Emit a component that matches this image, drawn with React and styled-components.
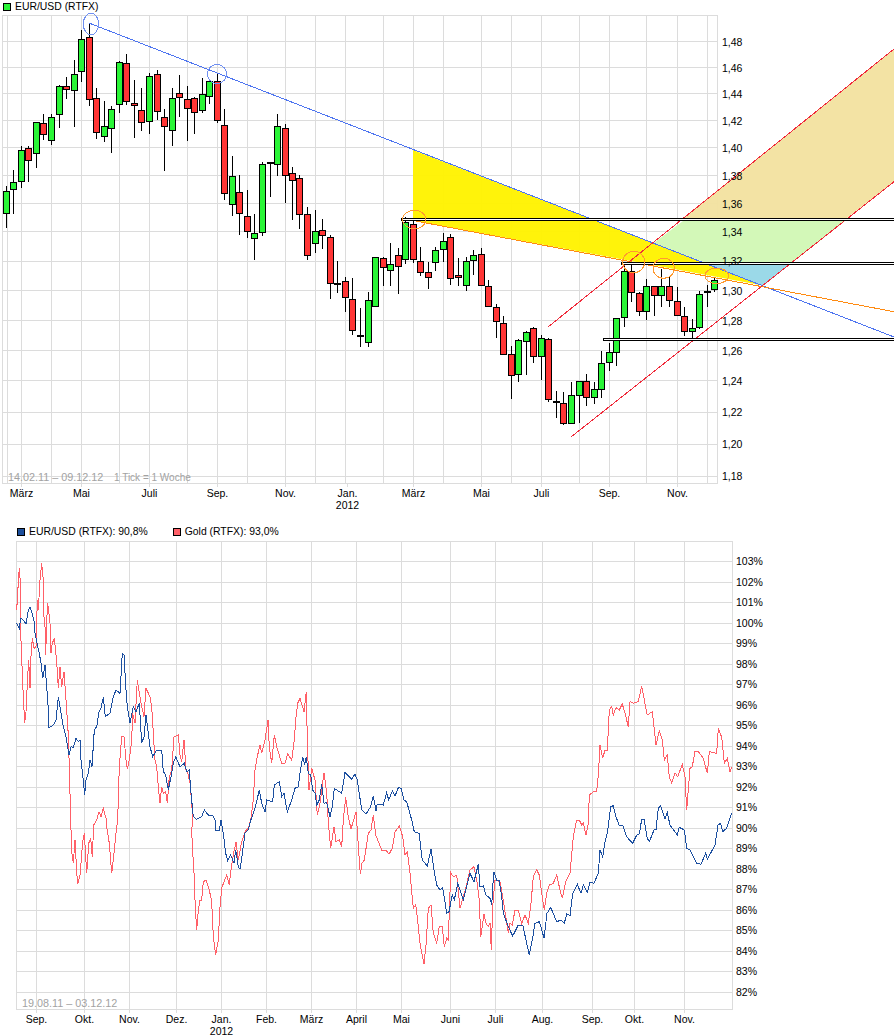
import React from 'react';
import styled, { createGlobalStyle } from 'styled-components';

const GlobalStyle = createGlobalStyle`
  html, body { margin: 0; padding: 0; background: #fff; }
  body { font-family: "Liberation Sans", Arial, sans-serif; }
`;

const Page = styled.main`
  width: 894px;
  height: 1036px;
  display: flex;
  flex-direction: column;
  overflow: hidden;
  background: #fff;
`;

const Legend = styled.div`
  display: flex;
  align-items: center;
  gap: 25px;
  height: ${p => p.$height}px;
  padding-left: ${p => p.$left}px;
  padding-top: ${p => p.$top}px;
  box-sizing: border-box;
  flex: none;
`;

const LegendItem = styled.div`
  display: flex;
  align-items: center;
  gap: 4px;
  font-size: 10.4px;
  line-height: 12px;
  color: #000;
  white-space: nowrap;
`;

const Swatch = styled.span`
  display: block;
  box-sizing: border-box;
  width: 8px;
  height: 8px;
  border: 1px solid #000;
  background: ${p => p.$color};
`;

const ChartSvg = styled.svg`
  display: block;
  flex: none;
  width: 894px;
  font-family: "Liberation Sans", Arial, sans-serif;
`;

const GridLine = styled.line`
  stroke: #dcdcdc;
  stroke-width: 1;
  shape-rendering: crispEdges;
`;

const AxisText = styled.text`
  font-size: 10.5px;
  fill: #000;
  text-anchor: ${p => p.$anchor || 'start'};
`;

const RangeText = styled.text`
  font-size: ${p => p.$size}px;
  fill: #a2a2a2;
`;

const Wick = styled.line`
  stroke: #000;
  stroke-width: 1;
  shape-rendering: crispEdges;
`;

const Body = styled.rect`
  stroke: #000;
  stroke-width: 1;
  shape-rendering: crispEdges;
  fill: ${p => (p.$up ? '#2af537' : '#ff3535')};
`;

const Zone = styled.polygon`
  fill: ${p => p.$fill};
  opacity: ${p => p.$opacity};
`;

const Trend = styled.line`
  stroke: ${p => p.$color};
  stroke-width: 1;
  shape-rendering: crispEdges;
`;

const Marker = styled.ellipse`
  fill: none;
  stroke: ${p => p.$color};
  stroke-width: 1;
  shape-rendering: crispEdges;
`;

const Level = styled.rect`
  fill: #fff;
  stroke: #000;
  stroke-width: 1;
  shape-rendering: crispEdges;
`;

const Series = styled.polyline`
  fill: none;
  stroke: ${p => p.$color};
  stroke-width: 1;
  shape-rendering: crispEdges;
`;

// [x, wickTop, wickBottom, bodyTop, bodyBottom, up] — measured at 3x with an offset per block
const block = (ox, oy, rows) =>
  rows.map(([x, wt, wb, bt, bb, c]) => ({
    x: Math.floor(ox + x / 3),
    wt: Math.floor(oy + wt / 3),
    wb: Math.floor(oy + wb / 3),
    bt: Math.floor(oy + bt / 3),
    bb: Math.floor(oy + bb / 3),
    up: c === 'g',
  }));

const candles = [
  ...block(0, 0, [
    [19,560,684,574,644,'g'],[40,510,642,547,571,'g'],[64,438,564,451,548,'g'],[85,440,548,445,485,'r'],
    [109,367,504,367,464,'g'],[130,342,422,370,407,'r'],[154,342,435,352,424,'g'],[178,255,384,259,347,'g'],
    [199,232,297,259,271,'r'],[223,180,381,223,274,'g'],[244,90,246,118,217,'g'],[268,70,318,112,301,'r'],
    [289,264,417,295,400,'r'],[313,304,426,379,412,'g'],[334,319,459,328,388,'g'],[358,184,339,187,316,'g'],
    [379,162,316,190,307,'r'],[403,240,414,310,319,'r'],[424,264,393,331,370,'r'],[448,220,402,229,367,'g'],
    [472,210,360,223,337,'r'],[493,327,513,352,382,'r'],[517,264,438,295,394,'g'],[538,225,351,280,295,'r'],
    [562,259,423,298,328,'r'],[583,292,402,295,340,'r'],[607,234,340,283,334,'g'],[628,238,312,244,292,'g'],
    [652,222,369,244,364,'r'],[673,327,600,376,583,'r'],[697,468,648,529,616,'g'],[718,525,705,577,643,'r'],
    [742,570,714,649,697,'r'],[763,642,780,700,718,'g'],[787,487,708,493,700,'g'],[811,487,591,487,493,'g'],
    [832,342,528,379,496,'g'],[856,372,609,385,529,'r'],[877,502,660,520,544,'r'],[898,525,687,535,646,'r'],
  ]),
  ...block(300, 130, [
    [22,232,390,253,379,'r'],[46,240,370,304,343,'g'],[67,267,357,301,319,'r'],[91,316,507,322,464,'r'],
    [112,393,489,460,466,'g'],[136,442,546,454,505,'r'],[157,444,617,508,605,'r'],[181,534,651,616,622,'r'],
    [205,487,651,511,640,'g'],[226,382,532,382,532,'g'],[250,382,470,385,415,'r'],[271,340,468,403,424,'g'],
    [295,354,492,376,412,'r'],[316,262,402,277,391,'g'],[340,265,400,283,391,'r'],[361,351,438,394,430,'r'],
    [385,397,477,427,445,'r'],[406,352,424,361,400,'g'],[430,309,396,334,361,'g'],[451,312,465,322,448,'r'],
    [475,384,468,436,445,'r'],[499,382,483,394,469,'g'],[520,361,435,376,394,'g'],[544,354,469,373,469,'r'],
    [565,450,532,469,532,'r'],[589,522,624,532,577,'r'],[610,559,676,580,676,'r'],[634,649,807,673,739,'r'],
    [655,628,758,631,736,'g'],[679,604,735,607,637,'g'],[700,592,699,595,682,'r'],[724,616,751,625,682,'g'],
    [745,625,817,628,811,'r'],[769,784,864,814,817,'r'],[790,787,887,820,883,'r'],[814,757,883,796,883,'g'],
    [838,754,879,754,799,'g'],[859,732,828,754,805,'r'],[883,757,822,778,805,'g'],
  ]),
  ...block(560, 130, [
    [124,664,805,700,781,'g'],[148,640,723,667,700,'g'],[169,565,708,565,670,'g'],[193,400,592,424,565,'g'],
    [214,402,518,424,490,'r'],[238,487,558,490,547,'r'],[259,447,570,469,547,'g'],[283,469,558,469,499,'r'],
    [304,417,531,469,499,'g'],[328,442,533,469,514,'r'],[352,472,559,514,559,'r'],[373,532,620,559,607,'r'],
    [397,568,630,595,607,'g'],[418,484,598,493,595,'g'],[442,466,533,484,490,'g'],[463,445,487,451,481,'g'],
  ]),
];

const path = (ox, oy, flat) => {
  const out = [];
  for (let i = 0; i < flat.length; i += 2) out.push([ox + flat[i] / 3, oy + flat[i + 1] / 3]);
  return out;
};
const toPoints = pts => pts.map(([x, y]) => `${x.toFixed(1)},${y.toFixed(1)}`).join(' ');

const euro = [
  ...path(0, 600, [50,70,58,85,62,55,70,60,78,72,85,30,90,22,95,35,103,65,105,100,110,125,118,160,123,190,128,235,135,195,140,260,144,315,147,383,160,375,168,360,175,290,180,320,190,380,198,410,207,465,213,440,220,443,228,415,235,425,240,420,243,480,250,540,254,585,258,540,265,520,270,480,276,500,283,390,290,380,297,335,303,325,310,292,316,350,330,340,340,290,348,270,360,280,367,160,372,165,378,270,382,320,390,370,400,320,408,335,418,310,425,430,432,410,438,345,450,440,458,470,470,450,485,450,490,515,497,525,505,570,513,530,520,490,527,470,540,500,553,490,560,515,568,510,572,570,580,650,590,658,605,650,613,630,625,645,638,645,645,660]),
  ...path(0, 820, [645,30,658,30,663,0,670,40,677,100,683,122,692,105,702,130,707,90,715,140,720,148,725,115,735,40,745,30,752,0]),
  ...path(0, 600, [755,655,765,625,778,570,785,610,795,635,800,600,818,605,823,555,838,545,845,590,852,580,862,635,875,600,885,565,895,560,900,520]),
  ...path(300, 660, [8,290,14,315,19,290,25,340,32,345,38,390,45,400,50,435,58,420,65,372,72,430,80,428,90,470,97,440,103,385,125,400,135,337,155,358,165,342,172,360,185,450,198,462,212,440,220,408,228,452,232,432,250,435,260,398,266,420,277,393,285,408,295,383,303,385,312,420,320,425,335,480,343,515,357,520,367,600,382,618,393,568,402,630,410,675,420,690,428,683,440,760,447,755,457,705,463,720,473,670,490,720,510,640,522,665,535,613,540,680,550,678,558,705,570,715,575,735,581,635,590,660,597,660,605,710,610,760,625,800,638,828,655,795,668,795,678,840,688,885,697,840,705,790,718,785,723,800,732,835,741,760,752,742,770,785,783,780,793,790,800,762,810,767,818,700,832,673,843,700,850,675,862,697,870,667]),
  ...path(590, 660, [12,670,25,640,30,570,38,590,45,545,52,520,62,440,70,437,78,470,88,497,98,495,110,530,120,542,128,550,140,525,148,522,155,478,162,478,172,535,178,545,193,508,198,510,205,445,212,437,225,478,232,458,240,495,262,525,268,502,283,510,290,565,300,570,320,610,333,613,347,580,352,598,375,555,384,495,392,490,398,515,410,505,425,460]),
];

const gold = [
  ...path(0, 430, [50,540,55,458,58,415,62,470]),
  ...path(0, 600, [62,100,65,175,68,250,72,330,74,370,78,335,82,250,86,180,90,265,92,180,97,115,102,145,108,140,110,50,113,0]),
  ...path(0, 430, [115,540,120,450,125,400,130,450]),
  ...path(0, 600, [130,30,135,80,137,165,140,60,143,10,148,50,150,70,153,160,157,130,163,115,170,185,175,265,180,200,185,260,192,215,197,285,200,330,205,405,208,500,212,660]),
  ...path(0, 820, [215,95,220,130,225,60,230,155,233,192,240,165,248,65,253,40,260,160,266,70,272,55,277,110,281,15,290,0]),
  ...path(0, 600, [297,635,303,650,310,625,318,655]),
  ...path(0, 820, [320,20,328,70,335,160,342,100,350,20,353,0]),
  ...path(0, 600, [358,500,365,410,372,410,378,480,382,508,388,480,395,420,398,340,405,370,412,240,418,280,425,320,432,350,438,265,450,290,455,320,460,400,465,480,470,500,475,560,480,610,485,560,490,580,497,575,502,610,508,530,515,510,522,410,535,405,540,465,545,485,552,420,558,510,565,525,570,550,575,610,578,650]),
  ...path(0, 820, [575,35,578,95,583,175,586,265,590,330,595,270,600,240,605,240,610,185,618,180,628,210,635,245,640,350,647,405,655,360,660,260,665,205,672,185,680,165,688,195,692,155,700,105,708,65,715,120,725,65,735,35,745,25,752,0]),
  ...path(0, 600, [760,600,765,510,772,470,780,435,785,460,795,420,804,360,808,440,815,490,823,405,830,440,845,490,855,490,863,462,875,480,883,420,888,350,893,310,900,295]),
  ...path(300, 660, [12,155,19,95,22,240,27,390,35,325,45,360,52,465,60,430,72,338,80,400,85,485,92,565,102,500,108,545,118,540,125,560,130,480,137,412,145,470,153,507,168,455,172,510,178,600,181,643,186,610,193,600,205,520,213,510,220,465,227,525,245,570,258,570,267,583,277,565,285,515,298,498,308,530,315,585,322,575,330,640,340,745,347,735,352,770,360,850,372,912,378,855,385,745,393,735,400,820,410,848,418,800,427,800,433,860,440,835,445,840,452,638,460,650,470,645,480,745,497,685,510,630,522,620,530,660,538,720,542,830,552,762,558,790,565,800,570,790,574,870,578,740,585,660,600,665,608,710,615,755,625,820,630,790,637,795,645,750,655,752,665,790,675,765,685,790,692,740,700,650,710,630,718,645,725,700,733,750,740,700,748,675,760,670,770,645,780,690,787,715,797,665,810,640,820,530,830,480,838,480,845,495,850,490,858,525,865,490,868,405]),
  ...path(590, 660, [10,395,20,395,25,345,30,255,38,295,45,270,52,270,58,150,65,140,70,165,78,143,88,150,97,132,105,160,115,200,120,125,130,130,145,125,155,78,163,120,172,165,187,155,198,255,208,212,217,240,223,300,232,285,238,350,245,370,255,338,263,350,277,313,285,350,290,450,300,325,307,320,315,273,325,275,340,295,352,340,358,275,380,280,385,205,395,232,403,310,412,295,420,335,425,320]),
];

const Grid = ({ xs, ys, left, right, top, bottom, ticks }) => (
  <g>
    {xs.map(x => <GridLine key={`v${x}`} x1={x + 0.5} x2={x + 0.5} y1={top} y2={bottom} />)}
    {ys.map(y => <GridLine key={`h${y}`} x1={left} x2={right} y1={y + 0.5} y2={y + 0.5} />)}
    {ticks.map(x => <GridLine key={`t${x}`} x1={x + 0.5} x2={x + 0.5} y1={bottom} y2={bottom + 3} />)}
  </g>
);

const Months = ({ items, y, yearY }) => (
  <g>
    {items.map(([label, x, year]) => (
      <React.Fragment key={`${label}${x}`}>
        <AxisText x={x + 0.5} y={y} $anchor="middle">{label}</AxisText>
        {year && <AxisText x={x + 0.5} y={yearY} $anchor="middle">{year}</AxisText>}
      </React.Fragment>
    ))}
  </g>
);

const priceX = [2, 7, 21, 51, 81, 119, 149, 187, 217, 247, 285, 315, 345, 383, 413, 443, 481, 511, 541, 579, 609, 646, 677, 707, 717];
const priceY = [15, 41, 67, 93, 120, 147, 175, 203, 231, 261, 290, 320, 350, 380, 412, 444, 476, 483];
const priceLabels = [
  ['1,48', 46], ['1,46', 72], ['1,44', 98], ['1,42', 125], ['1,40', 152], ['1,38', 180], ['1,36', 208], ['1,34', 236],
  ['1,32', 265], ['1,30', 295], ['1,28', 325], ['1,26', 355], ['1,24', 385], ['1,22', 416], ['1,20', 448], ['1,18', 480],
];
const priceMonths = [
  ['März', 21], ['Mai', 81], ['Juli', 149], ['Sep.', 217], ['Nov.', 285], ['Jan.', 347, '2012'],
  ['März', 413], ['Mai', 481], ['Juli', 541], ['Sep.', 609], ['Nov.', 677],
];

const compareX = [16, 36, 84, 129, 176, 221, 266, 311, 356, 401, 450, 495, 542, 592, 634, 684, 732];
const compareY = [541, 561, 582, 602, 623, 643, 664, 684, 705, 725, 746, 766, 787, 807, 828, 848, 869, 889, 910, 930, 951, 971, 992, 1009];
const percentLabels = [103,102,101,100,99,98,97,96,95,94,93,92,91,90,89,88,87,86,85,84,83,82];
const compareMonths = [
  ['Sep.', 36], ['Okt.', 84], ['Nov.', 129], ['Dez.', 176], ['Jan.', 221, '2012'], ['Feb.', 266], ['März', 311],
  ['April', 356], ['Mai', 401], ['Juni', 450], ['Juli', 495], ['Aug.', 542], ['Sep.', 592], ['Okt.', 634], ['Nov.', 684],
];

const PriceChart = () => (
  <ChartSvg height="508" viewBox="0 13 894 508">
    <Grid xs={priceX} ys={priceY} left={2} right={718} top={15} bottom={484} ticks={[21, 81, 149, 217, 285, 347, 413, 481, 541, 609, 677]} />
    <Zone $fill="#fff200" $opacity={0.96} points="413,150 763,285.5 413,220.5" />
    <Zone $fill="#f2e2a0" $opacity={0.96} points="683,218 793,130 894,49 894,181.7 847,218" />
    <Zone $fill="#d3f8b8" $opacity={1} points="683,221 653,243.5 706.7,263 791.7,263 845,221" />
    <Zone $fill="#9bd9e8" $opacity={1} points="706.7,264 763.3,285.7 790,264" />
    {candles.map(c => (
      <g key={c.x}>
        <Wick x1={c.x + 0.5} x2={c.x + 0.5} y1={c.wt} y2={c.wb} />
        <Body x={c.x - 2.5} y={c.bt + 0.5} width={6} height={Math.max(c.bb - c.bt - 1, 1)} $up={c.up} />
      </g>
    ))}
    <Trend $color="#4d74f0" x1={89} y1={23} x2={894} y2={337} />
    <Trend $color="#ff8a10" x1={413} y1={220.5} x2={894} y2={311.7} />
    <Trend $color="#f02a3a" x1={548} y1={327} x2={894} y2={49} />
    <Trend $color="#f02a3a" x1={571} y1={437} x2={894} y2={181.7} />
    <Level x={401.5} y={218.5} width={494} height={2} />
    <Level x={621.5} y={262.5} width={274} height={2} />
    <Level x={603.5} y={338.5} width={292} height={2} />
    <Marker $color="#6f8ff0" cx={91} cy={24} rx={7.7} ry={10.7} />
    <Marker $color="#6f8ff0" cx={217} cy={74} rx={9.6} ry={9.5} />
    <Marker $color="#ff9a30" cx={414.3} cy={219.5} rx={11.7} ry={9.2} />
    <Marker $color="#ff9a30" cx={633.7} cy={262} rx={11} ry={10.7} />
    <Marker $color="#ff9a30" cx={663.7} cy={268.3} rx={10.7} ry={10} />
    <Marker $color="#ff9a30" cx={716.8} cy={275.8} rx={11.8} ry={7.8} />
    {priceLabels.map(([t, y]) => <AxisText key={t} x={722} y={y}>{t}</AxisText>)}
    <Months items={priceMonths} y={497} yearY={509} />
    <RangeText $size={10.8} x={8} y={481}>14.02.11 – 09.12.12</RangeText>
    <RangeText $size={10} x={114} y={481}>1 Tick = 1 Woche</RangeText>
  </ChartSvg>
);

const CompareChart = () => (
  <ChartSvg height="495" viewBox="0 541 894 495">
    <Grid xs={compareX} ys={compareY} left={16} right={733} top={541} bottom={1010} ticks={compareX.slice(1, 16)} />
    <Series $color="#ff6068" points={toPoints(gold)} />
    <Series $color="#1c4fa0" points={toPoints(euro)} />
    {percentLabels.map((p, i) => (
      <AxisText key={p} x={736} y={compareY[i + 1] + 4}>{p}%</AxisText>
    ))}
    <Months items={compareMonths} y={1023} yearY={1035} />
    <RangeText $size={10.8} x={22} y={1007}>19.08.11 – 03.12.12</RangeText>
  </ChartSvg>
);

export default function App() {
  return (
    <Page>
      <GlobalStyle />
      <Legend $height={13} $left={3} $top={0}>
        <LegendItem><Swatch $color="#2af537" />EUR/USD (RTFX)</LegendItem>
      </Legend>
      <PriceChart />
      <Legend $height={20} $left={17} $top={2}>
        <LegendItem><Swatch $color="#1c4f9c" />EUR/USD (RTFX): 90,8%</LegendItem>
        <LegendItem><Swatch $color="#ff6068" />Gold (RTFX): 93,0%</LegendItem>
      </Legend>
      <CompareChart />
    </Page>
  );
}
